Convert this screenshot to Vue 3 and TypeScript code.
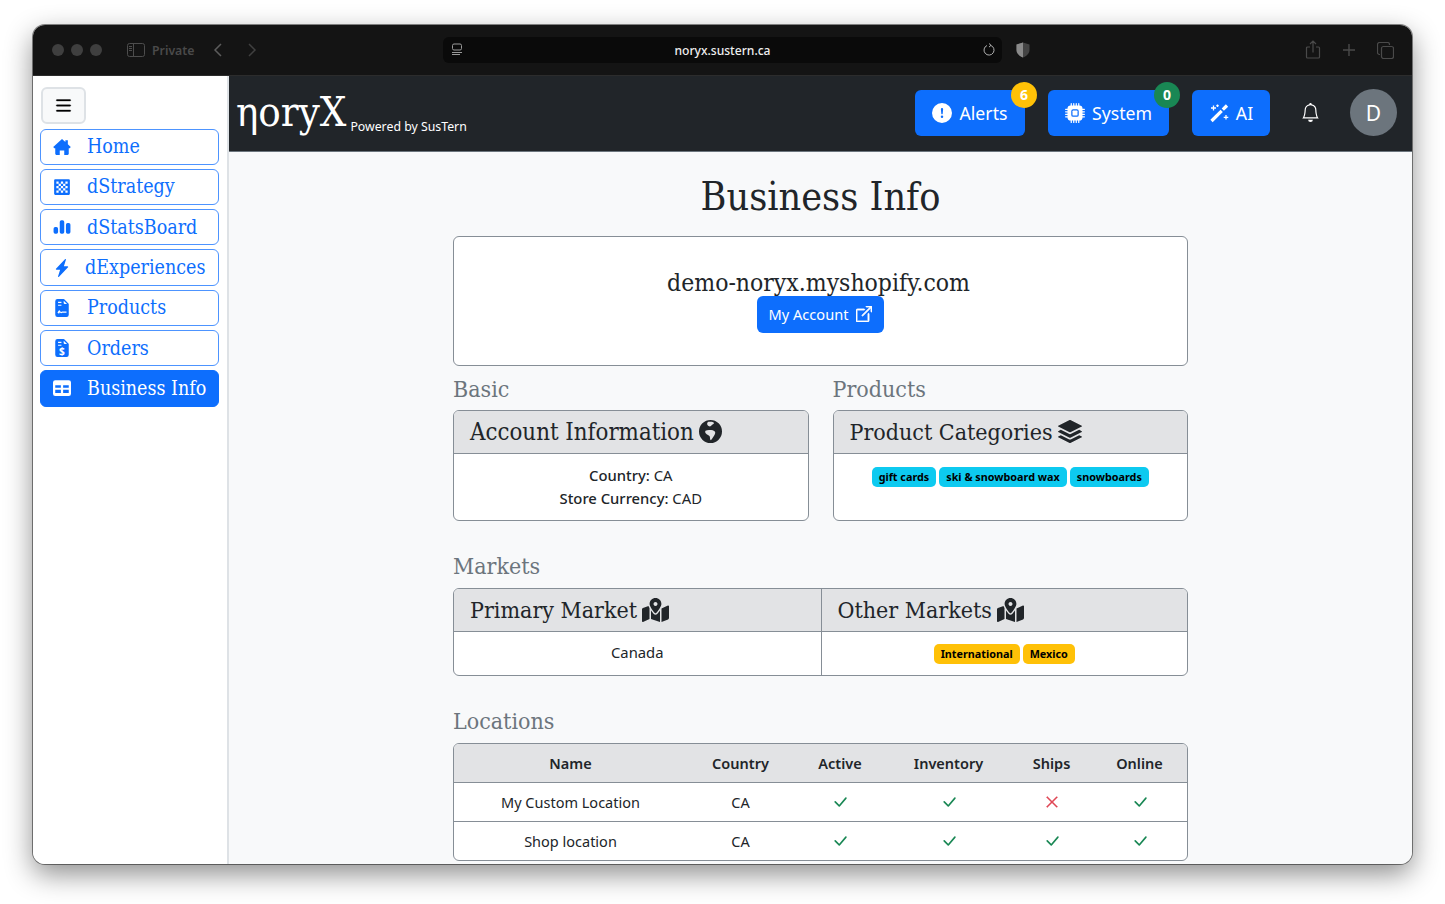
<script setup lang="ts">
interface NavItem {
  label: string
  icon: string
  active?: boolean
  mark?: string
  tight?: boolean
}

const cells = (): string => {
  let d = 'M2 1h12a1 1 0 0 1 1 1v12a1 1 0 0 1-1 1H2a1 1 0 0 1-1-1V2a1 1 0 0 1 1-1z'
  for (let r = 0; r < 5; r++) {
    for (let c = 0; c < 5; c++) {
      if ((r + c) % 2 === 0) d += `M${3 + c * 2} ${3 + r * 2}h2v2h-2z`
    }
  }
  return d
}

const filePath = 'M4 0h5.3a1 1 0 0 1 .7.3L13.7 4a1 1 0 0 1 .3.7V14a2 2 0 0 1-2 2H4a2 2 0 0 1-2-2V2a2 2 0 0 1 2-2zM9.5 1.5v2a1 1 0 0 0 1 1h2l-3-3zM4.5 2.5v1h3v-1zM4.5 5v1h3V5z'

const icons: Record<string, string> = {
  home: 'M8 .8 11 3.500V2h2.200v3.500L15.800 8l-.9 1H14v5a1 1 0 0 1-1 1h-3v-4H6v4H3a1 1 0 0 1-1-1V9H1.100L.2 8z',
  grid: cells(),
  bars: 'M2 8h1a1.5 1.5 0 0 1 1.500 1.500v3A1.500 1.500 0 0 1 3 14H2a1.500 1.500 0 0 1-1.500-1.500v-3A1.500 1.500 0 0 1 2 8zM7.500 2h1A1.500 1.500 0 0 1 10 3.500v9A1.500 1.500 0 0 1 8.500 14h-1A1.500 1.500 0 0 1 6 12.500v-9A1.500 1.500 0 0 1 7.500 2zM13 4.500h1a1.500 1.500 0 0 1 1.500 1.500v6.500A1.500 1.500 0 0 1 14 14h-1a1.500 1.500 0 0 1-1.500-1.500V6A1.500 1.500 0 0 1 13 4.500z',
  bolt: 'M11.251.068a.5.5 0 0 1 .227.58L9.677 6.5H13a.5.5 0 0 1 .364.843l-8 8.5a.5.5 0 0 1-.842-.49L6.323 9.5H3a.5.5 0 0 1-.364-.843l8-8.5a.5.5 0 0 1 .615-.09z',
  file: filePath,
  fileSquiggle: `${filePath}M4 12.300c1-2.600 1.800-3 2.500-1.500.5 1 1 .9 1.500.4h4v1.100H8.300c-.9.5-1.700.3-2.200-.6-.3.3-.5.8-.7 1.300z`,
  table: 'M0 3a2 2 0 0 1 2-2h12a2 2 0 0 1 2 2v10a2 2 0 0 1-2 2H2a2 2 0 0 1-2-2V3zM2 5.500v2.300h5V5.500H2zM9 5.500v2.300h5V5.500H9zM2 9.500V12a.5.5 0 0 0 0 .5h5v-3H2zM9 9.500v3h5V9.500H9z',
}

const navItems: NavItem[] = [
  { label: 'Home', icon: 'home' },
  { label: 'dStrategy', icon: 'grid' },
  { label: 'dStatsBoard', icon: 'bars' },
  { label: 'dExperiences', icon: 'bolt', tight: true },
  { label: 'Products', icon: 'fileSquiggle' },
  { label: 'Orders', icon: 'file', mark: '$' },
  { label: 'Business Info', icon: 'table', active: true },
]

const categories = ['gift cards', 'ski & snowboard wax', 'snowboards']
const markets = ['International', 'Mexico']

// dark disc, continents cut out
const globePath = 'M8 0a8 8 0 1 0 0 16A8 8 0 0 0 8 0ZM4.500 7.500C5.500 6.800 7 6.800 8.500 7 10 7.200 11.500 7.800 11.300 9 11 10.500 9.500 12.500 8.300 14 7.500 14 7.800 12.500 7.500 11.500 7.200 10.500 5.500 10.500 4.500 9 4.200 8.500 4.200 8 4.500 7.500ZM6.500 1.300C8 1 10 1.200 10.500 2 10 3 8.800 3.200 8.300 4.200 7.500 4.800 6.500 4.300 5.800 3.300 5.500 2.500 5.800 1.800 6.500 1.300Z'
const stackPath = 'm14.12 10.163 1.715.858c.22.11.22.424 0 .534L8.267 15.34a.598.598 0 0 1-.534 0L.165 11.555a.299.299 0 0 1 0-.534l1.716-.858 5.317 2.659c.505.252 1.1.252 1.604 0l5.317-2.66zM7.733.063a.598.598 0 0 1 .534 0l7.568 3.784a.3.3 0 0 1 0 .535L8.267 8.165a.598.598 0 0 1-.534 0L.165 4.382a.299.299 0 0 1 0-.535L7.733.063zM14.12 6.576l1.715.858c.22.11.22.424 0 .534l-7.568 3.784a.598.598 0 0 1-.534 0L.165 7.968a.299.299 0 0 1 0-.534l1.716-.858 5.317 2.659c.505.252 1.1.252 1.604 0l5.317-2.659z'
const mapPath = 'M288 0c-69.59 0-126 56.41-126 126 0 56.26 82.35 158.8 113.9 196.02 6.39 7.54 17.82 7.54 24.2 0C331.65 284.8 414 182.26 414 126 414 56.41 357.59 0 288 0zm0 168c-23.2 0-42-18.8-42-42s18.8-42 42-42 42 18.8 42 42-18.8 42-42 42zM20.12 215.95A32.006 32.006 0 0 0 0 245.66v250.32c0 11.32 11.43 19.06 21.94 14.86L160 448V214.92c-8.84-15.98-16.07-31.54-21.25-46.42L20.12 215.95zM288 359.67c-14.07 0-27.38-6.18-36.51-16.96-19.66-23.2-40.57-49.62-59.49-76.72v182l192 64V266c-18.92 27.09-39.82 53.52-59.49 76.72-9.13 10.77-22.44 16.95-36.51 16.95zm266.06-198.51L416 224v288l139.88-55.95A31.996 31.996 0 0 0 576 426.34V176.02c0-11.32-11.43-19.06-21.94-14.86z'

const checkPath = 'M12.736 3.97a.733.733 0 0 1 1.047 0c.286.289.29.756.01 1.05L7.88 12.01a.733.733 0 0 1-1.065.02L3.217 8.384a.757.757 0 0 1 0-1.06.733.733 0 0 1 1.047 0l3.052 3.093 5.4-6.425a.247.247 0 0 1 .02-.022Z'
const crossPath = 'M2.146 2.854a.5.5 0 1 1 .708-.708L8 7.293l5.146-5.147a.5.5 0 0 1 .708.708L8.707 8l5.147 5.146a.5.5 0 0 1-.708.708L8 8.707l-5.146 5.147a.5.5 0 0 1-.708-.708L7.293 8 2.146 2.854Z'

const columns = ['Name', 'Country', 'Active', 'Inventory', 'Ships', 'Online']
const locations = [
  { name: 'My Custom Location', country: 'CA', flags: [true, true, false, true] },
  { name: 'Shop location', country: 'CA', flags: [true, true, true, true] },
]
</script>

<template>
  <div class="stage">
    <div class="window">
      <div class="chrome">
        <div class="chrome-left">
          <span class="light"></span>
          <span class="light"></span>
          <span class="light"></span>
          <svg class="tabs-icon" viewBox="0 0 18 14" width="18" height="14" fill="none" stroke="currentColor">
            <rect x="0.5" y="0.5" width="17" height="13" rx="2" />
            <path d="M6.500 .5v13M2 3.500h3M2 5.500h3M2 7.500h3" />
          </svg>
          <span class="private">Private</span>
          <svg class="chev" viewBox="0 0 10 16" width="10" height="16" fill="none" stroke="#5c5c5c" stroke-width="1.500">
            <path d="M8 2 2 8l6 6" />
          </svg>
          <svg class="chev chev-next" viewBox="0 0 10 16" width="10" height="16" fill="none" stroke="#404040" stroke-width="1.500">
            <path d="m2 2 6 6-6 6" />
          </svg>
        </div>
        <div class="urlbar">
          <svg viewBox="0 0 12 14" width="12" height="14" fill="none" stroke="#9a9a9a">
            <rect x="1.500" y="1" width="9" height="6" rx="1.500" />
            <path d="M1 9.500h10M1 11.500h8" />
          </svg>
          <span class="url">noryx.sustern.ca</span>
          <svg viewBox="0 0 14 14" width="14" height="14" fill="none" stroke="#b0b0b0">
            <path d="M8.500 2.300a5 5 0 1 1-3.500.2M7 .5l2 1.800-2 1.800" />
          </svg>
        </div>
        <svg class="shield" viewBox="0 0 14 16" width="14" height="16">
          <path d="M7 .5 13.500 2.500V8c0 3.500-3 6-6.500 7.500C3.500 14 .5 11.500 .5 8V2.500z" fill="#444" />
          <path d="M7 .5 .5 2.500V8c0 3.500 3 6 6.500 7.500z" fill="#8a8a8a" />
        </svg>
        <div class="chrome-right">
          <svg viewBox="0 0 16 20" width="16" height="20" fill="none" stroke="#4a4a4a" stroke-width="1.200">
            <path d="M5 7H2.500a1 1 0 0 0-1 1v9a1 1 0 0 0 1 1h11a1 1 0 0 0 1-1V8a1 1 0 0 0-1-1H11M8 12.500V1.500M5 4l3-3 3 3" />
          </svg>
          <svg viewBox="0 0 14 14" width="14" height="14" fill="none" stroke="#4a4a4a" stroke-width="1.400">
            <path d="M7 1v12M1 7h12" />
          </svg>
          <svg viewBox="0 0 17 17" width="17" height="17" fill="none" stroke="#4a4a4a" stroke-width="1.200">
            <rect x="4.500" y="4.500" width="12" height="12" rx="2" />
            <path d="M3 12.500H2.500a2 2 0 0 1-2-2v-8a2 2 0 0 1 2-2h8a2 2 0 0 1 2 2V3" />
          </svg>
        </div>
      </div>

      <div class="app">
        <aside class="sidebar">
          <button class="toggle" type="button" aria-label="Toggle menu">
            <svg viewBox="0 0 16 16" width="21" height="21" fill="#000" stroke="#000" stroke-width=".3">
              <path d="M2.500 12a.5.5 0 0 1 .5-.5h10a.5.5 0 0 1 0 1H3a.5.5 0 0 1-.5-.5zm0-4a.5.5 0 0 1 .5-.5h10a.5.5 0 0 1 0 1H3a.5.5 0 0 1-.5-.5zm0-4a.5.5 0 0 1 .5-.5h10a.5.5 0 0 1 0 1H3a.5.5 0 0 1-.5-.5z" />
            </svg>
          </button>
          <nav class="nav">
            <a
              v-for="item in navItems"
              :key="item.label"
              class="nav-item"
              :class="{ active: item.active, tight: item.tight }"
            >
              <svg class="nav-icon" viewBox="0 0 16 16" width="18" height="18" fill="currentColor">
                <path :d="icons[item.icon]" fill-rule="evenodd" />
                <text v-if="item.mark" x="8" y="14" class="nav-mark">{{ item.mark }}</text>
              </svg>
              <span>{{ item.label }}</span>
            </a>
          </nav>
        </aside>

        <div class="content">
          <header class="topbar">
            <div class="brand">
              <span class="logo">ηoryX</span>
              <span class="powered">Powered by SusTern</span>
            </div>
            <div class="actions">
              <button class="action alerts" type="button">
                <svg viewBox="0 0 16 16" width="20" height="20" fill="currentColor">
                  <path d="M16 8A8 8 0 1 1 0 8a8 8 0 0 1 16 0zM8 4a.905.905 0 0 0-.9.995l.35 3.507a.552.552 0 0 0 1.100 0l.35-3.507A.905.905 0 0 0 8 4zm.002 6a1 1 0 1 0 0 2 1 1 0 0 0 0-2z" />
                </svg>
                Alerts
                <span class="count count-warn">6</span>
              </button>
              <button class="action system" type="button">
                <svg viewBox="0 0 16 16" width="20" height="20" fill="currentColor">
                  <path d="M6.500 6a.5.5 0 0 0-.5.5v3a.5.5 0 0 0 .5.5h3a.5.5 0 0 0 .5-.5v-3a.5.5 0 0 0-.5-.5h-3z" />
                  <path d="M5.500.5a.5.5 0 0 0-1 0V2A2.500 2.500 0 0 0 2 4.500H.5a.5.5 0 0 0 0 1H2v1H.5a.5.5 0 0 0 0 1H2v1H.5a.5.5 0 0 0 0 1H2v1H.5a.5.5 0 0 0 0 1H2A2.500 2.500 0 0 0 4.500 14v1.500a.5.5 0 0 0 1 0V14h1v1.500a.5.5 0 0 0 1 0V14h1v1.500a.5.5 0 0 0 1 0V14h1v1.500a.5.5 0 0 0 1 0V14a2.500 2.500 0 0 0 2.500-2.500h1.500a.5.5 0 0 0 0-1H14v-1h1.500a.5.5 0 0 0 0-1H14v-1h1.500a.5.5 0 0 0 0-1H14v-1h1.500a.5.5 0 0 0 0-1H14A2.500 2.500 0 0 0 11.500 2V.5a.5.5 0 0 0-1 0V2h-1V.5a.5.5 0 0 0-1 0V2h-1V.5a.5.5 0 0 0-1 0V2h-1V.5zm1 4.500h3A1.500 1.500 0 0 1 11 6.500v3A1.500 1.500 0 0 1 9.500 11h-3A1.500 1.500 0 0 1 5 9.500v-3A1.500 1.500 0 0 1 6.500 5z" />
                </svg>
                System
                <span class="count count-ok">0</span>
              </button>
              <button class="action ai" type="button">
                <svg viewBox="0 0 20 20" width="20" height="20" fill="none" stroke="currentColor">
                  <path d="M2.500 18 12.700 7.800" stroke-width="3.200" />
                  <path d="m13.800 6.700 4.200-4.200" stroke-width="3.200" />
                  <path d="M4.500 2.500v5M2 5h5M8.500 1.500v2.400M7.300 2.700h2.400M17 12v4.600M14.700 14.300h4.600" stroke-width="1.300" />
                </svg>
                AI
              </button>
              <svg class="bell" viewBox="0 0 16 16" width="19" height="19" fill="#fff">
                <path d="M8 16a2 2 0 0 0 2-2H6a2 2 0 0 0 2 2zM8 1.918l-.797.161A4.002 4.002 0 0 0 4 6c0 .628-.134 2.197-.459 3.742-.16.767-.376 1.566-.663 2.258h10.244c-.287-.692-.502-1.490-.663-2.258C12.134 8.197 12 6.628 12 6a4.002 4.002 0 0 0-3.203-3.920L8 1.917zM14.220 12c.223.447.481.801.78 1H1c.299-.199.557-.553.78-1C2.680 10.200 3 6.880 3 6c0-2.420 1.720-4.440 4.005-4.901a1 1 0 1 1 1.990 0A5.002 5.002 0 0 1 13 6c0 .880.320 4.200 1.220 6z" />
              </svg>
              <span class="avatar">D</span>
            </div>
          </header>

          <main class="main">
            <h1 class="title">Business Info</h1>
            <div class="column">
              <section class="store">
                <div class="store-name">demo-noryx.myshopify.com</div>
                <button class="account" type="button">
                  My Account
                  <svg viewBox="0 0 16 16" width="16" height="16" fill="currentColor" stroke="currentColor" stroke-width=".9">
                    <path d="M8.636 3.500a.5.5 0 0 0-.5-.5H1.500A1.500 1.500 0 0 0 0 4.500v10A1.500 1.500 0 0 0 1.500 16h10a1.500 1.500 0 0 0 1.500-1.500V7.864a.5.5 0 0 0-1 0V14.500a.5.5 0 0 1-.5.5h-10a.5.5 0 0 1-.5-.5v-10a.5.5 0 0 1 .5-.5h6.636a.5.5 0 0 0 .5-.5z" />
                    <path d="M16 .5a.5.5 0 0 0-.5-.5h-5a.5.5 0 0 0 0 1h3.793L6.146 9.146a.5.5 0 1 0 .708.708L15 1.707V5.500a.5.5 0 0 0 1 0v-5z" />
                  </svg>
                </button>
              </section>

              <div class="two-up">
                <div>
                  <h2 class="section">Basic</h2>
                  <div class="card">
                    <div class="card-head head-wide">
                      Account Information
                      <svg viewBox="0 0 16 16" width="23" height="23" fill="currentColor"><path :d="globePath" fill-rule="evenodd" /></svg>
                    </div>
                    <div class="card-body info">
                      <div>Country: <span class="value">CA</span></div>
                      <div>Store Currency: <span class="value">CAD</span></div>
                    </div>
                  </div>
                </div>
                <div>
                  <h2 class="section">Products</h2>
                  <div class="card">
                    <div class="card-head">
                      Product Categories
                      <svg viewBox="0 0 16 16" width="24" height="24" fill="currentColor"><path :d="stackPath" /></svg>
                    </div>
                    <div class="card-body tags">
                      <span v-for="c in categories" :key="c" class="tag tag-info">{{ c }}</span>
                    </div>
                  </div>
                </div>
              </div>

              <h2 class="section section-gap">Markets</h2>
              <div class="card markets">
                <div class="market">
                  <div class="card-head">
                    Primary Market
                    <svg viewBox="0 0 576 512" width="27" height="24" fill="currentColor"><path :d="mapPath" /></svg>
                  </div>
                  <div class="market-body canada">Canada</div>
                </div>
                <div class="market">
                  <div class="card-head">
                    Other Markets
                    <svg viewBox="0 0 576 512" width="27" height="24" fill="currentColor"><path :d="mapPath" /></svg>
                  </div>
                  <div class="market-body tags">
                    <span v-for="m in markets" :key="m" class="tag tag-warn">{{ m }}</span>
                  </div>
                </div>
              </div>

              <h2 class="section section-gap">Locations</h2>
              <div class="card">
                <table class="locations">
                  <thead>
                    <tr>
                      <th v-for="c in columns" :key="c">{{ c }}</th>
                    </tr>
                  </thead>
                  <tbody>
                    <tr v-for="loc in locations" :key="loc.name">
                      <td>{{ loc.name }}</td>
                      <td>{{ loc.country }}</td>
                      <td v-for="(flag, idx) in loc.flags" :key="idx">
                        <svg
                          viewBox="0 0 16 16"
                          :width="flag ? 18 : 14"
                          :height="flag ? 18 : 14"
                          :class="flag ? 'yes' : 'no'"
                          fill="currentColor"
                        >
                          <path :d="flag ? checkPath : crossPath" />
                        </svg>
                      </td>
                    </tr>
                  </tbody>
                </table>
              </div>
            </div>
          </main>
        </div>
      </div>
    </div>
  </div>
</template>

<style>
html,
body {
  margin: 0;
  background: #fff;
  overflow: hidden;
}
</style>

<style scoped>
.stage {
  box-sizing: border-box;
  width: 1445px;
  height: 904px;
  padding: 25px 33px 40px 33px;
  font-family: 'Noto Sans', sans-serif;
  color: #212529;
}

.window {
  display: flex;
  flex-direction: column;
  height: 100%;
  border-radius: 12px;
  overflow: hidden;
  box-shadow: 0 0 0 1px rgba(0, 0, 0, 0.45), 0 10px 28px rgba(0, 0, 0, 0.45);
}

.chrome {
  display: flex;
  align-items: center;
  height: 50px;
  flex: none;
  background: #141414;
  border-bottom: 1px solid #2c2c2c;
}

.chrome-left {
  display: flex;
  align-items: center;
  width: 410px;
  padding-left: 19px;
  box-sizing: border-box;
}

.light {
  width: 12px;
  height: 12px;
  margin-right: 7px;
  border-radius: 50%;
  background: #3f3f3f;
}

.tabs-icon {
  margin-left: 18px;
  color: #4d4d4d;
}

.private {
  margin-left: 7px;
  font-size: 12.3px;
  font-weight: 600;
  color: #4a4a4a;
}

.chev {
  margin-left: 18px;
}

.chev-next {
  margin-left: 24px;
}

.urlbar {
  display: flex;
  align-items: center;
  justify-content: space-between;
  width: 559px;
  height: 26px;
  padding: 0 6px 0 8px;
  box-sizing: border-box;
  border-radius: 6px;
  background: #0a0a0a;
}

.url {
  font-size: 12.1px;
  font-weight: 500;
  color: #eeeeee;
}

.shield {
  margin-left: 14px;
}

.chrome-right {
  display: flex;
  align-items: center;
  gap: 21px;
  margin-left: auto;
  padding-right: 18px;
}

.app {
  display: flex;
  flex: 1;
  min-height: 0;
}

.sidebar {
  width: 196px;
  flex: none;
  padding: 11px 8px 0 7px;
  box-sizing: border-box;
  background: #fff;
  border-right: 2px solid #dee2e6;
}

.toggle {
  display: flex;
  align-items: center;
  justify-content: center;
  width: 45px;
  height: 37px;
  margin-left: 1px;
  padding: 0;
  border: 2px solid #dee2e6;
  border-radius: 6px;
  background: #f8f9fa;
}

.nav {
  display: flex;
  flex-direction: column;
  gap: 4px;
  margin-top: 4.500px;
}

.nav-item {
  display: flex;
  align-items: center;
  height: 36.3px;
  padding-left: 12px;
  box-sizing: border-box;
  border: 1.5px solid #4d94ff;
  border-radius: 6px;
  font-family: 'DejaVu Serif Condensed', 'DejaVu Serif', serif;
  font-size: 19.5px;
  color: #0d6efd;
}

.nav-item.active {
  background: #0d6efd;
  border-color: #0d6efd;
  color: #fff;
}

.nav-icon {
  flex: none;
  margin-right: 16px;
}

.nav-item.tight .nav-icon {
  margin-right: 14px;
}

.nav-mark {
  font-family: 'Noto Sans', sans-serif;
  font-size: 9px;
  font-weight: 700;
  text-anchor: middle;
  fill: #fff;
}

.content {
  flex: 1;
  display: flex;
  flex-direction: column;
  min-width: 0;
  background: #f8f9fa;
}

.topbar {
  display: flex;
  align-items: center;
  justify-content: space-between;
  flex: none;
  height: 76px;
  padding: 0 15px 0 7px;
  box-sizing: border-box;
  background: #212529;
  border-bottom: 1px solid #6c757d;
}

.brand {
  display: flex;
  align-items: flex-end;
  gap: 4px;
  padding-bottom: 4px;
  color: #fff;
}

.logo {
  font-family: 'DejaVu Serif Condensed', 'DejaVu Serif', serif;
  font-size: 41.500px;
  line-height: 1;
}

.powered {
  margin-bottom: -4px;
  font-size: 12.300px;
  line-height: 18px;
}

.actions {
  display: flex;
  align-items: center;
  margin-bottom: 2px;
}

.action {
  position: relative;
  display: flex;
  align-items: center;
  justify-content: center;
  gap: 7px;
  height: 46px;
  margin-right: 23px;
  padding: 0;
  border: 0;
  border-radius: 6px;
  background: #0d6efd;
  color: #fff;
  font-family: inherit;
  font-size: 17.700px;
}

.alerts {
  width: 110px;
}

.system {
  width: 121px;
}

.ai {
  width: 78px;
}

.count {
  position: absolute;
  top: -8px;
  right: -12px;
  width: 26px;
  height: 26px;
  border-radius: 50%;
  font-size: 14px;
  font-weight: 700;
  line-height: 26px;
  text-align: center;
  color: #fff;
}

.count-warn {
  background: #ffc107;
}

.count-ok {
  right: -11px;
  background: #198754;
}

.bell {
  margin: 0 30px 0 8px;
}

.avatar {
  display: flex;
  align-items: center;
  justify-content: center;
  width: 47px;
  height: 47px;
  border-radius: 50%;
  background: #6c757d;
  color: #fff;
  font-size: 21px;
}

.main {
  flex: 1;
  min-height: 0;
  overflow: hidden;
  text-align: center;
}

.title {
  margin: 0;
  height: 84px;
  font-family: 'DejaVu Serif Condensed', 'DejaVu Serif', serif;
  font-size: 39.200px;
  font-weight: 400;
  line-height: 90px;
}

.column {
  width: 735px;
  margin: 0 auto;
  text-align: left;
}

.store {
  display: flex;
  flex-direction: column;
  align-items: center;
  height: 130px;
  padding-top: 33px;
  box-sizing: border-box;
  border: 1px solid #868e96;
  border-radius: 6px;
  background: #fff;
}

.store-name {
  padding-right: 4px;
  font-family: 'DejaVu Serif Condensed', 'DejaVu Serif', serif;
  font-size: 24.500px;
  line-height: 26px;
}

.account {
  display: flex;
  align-items: center;
  gap: 8px;
  height: 37px;
  padding: 0 12px 2px;
  border: 0;
  border-radius: 6px;
  background: #0d6efd;
  color: #fff;
  font-family: inherit;
  font-size: 14.600px;
}

.two-up {
  display: grid;
  grid-template-columns: 1fr 1fr;
  gap: 24px;
}

.section {
  margin: 9px 0 6px;
  font-family: 'DejaVu Serif Condensed', 'DejaVu Serif', serif;
  font-size: 23px;
  font-weight: 400;
  line-height: 29px;
  color: #6c757d;
}

.section-gap {
  margin: 31px 0 7px;
}

.card {
  border: 1px solid #868e96;
  border-radius: 6px;
  background: #fff;
  overflow: hidden;
}

.card-head {
  display: flex;
  align-items: center;
  gap: 5px;
  height: 43px;
  padding: 0 0 1px 16px;
  box-sizing: border-box;
  background: #e2e3e5;
  border-bottom: 1px solid #868e96;
  font-family: 'DejaVu Serif Condensed', 'DejaVu Serif', serif;
  font-size: 23px;
}

.head-wide {
  font-size: 23.800px;
}

.card-body {
  height: 66px;
  box-sizing: border-box;
}

.info {
  padding-top: 10px;
  text-align: center;
  font-size: 14.800px;
  font-weight: 500;
  line-height: 23px;
}

.value {
  font-weight: 400;
}

.tags {
  display: flex;
  justify-content: center;
  align-items: flex-start;
  gap: 3px;
  padding-top: 13px;
}

.tag {
  padding: 0 7px;
  height: 19.500px;
  border-radius: 5px;
  font-size: 10.800px;
  font-weight: 700;
  line-height: 19.500px;
  color: #000;
}

.tag-info {
  background: #0dcaf0;
}

.tag-warn {
  background: #ffc107;
}

.markets {
  display: grid;
  grid-template-columns: 1fr 1fr;
}

.market + .market {
  border-left: 1px solid #868e96;
}

.market-body {
  height: 43px;
  box-sizing: border-box;
  text-align: center;
  font-size: 14.800px;
}

.canada {
  padding-top: 10px;
}

.market-body.tags {
  padding-top: 12px;
}

.locations {
  width: 100%;
  border-collapse: collapse;
  table-layout: fixed;
  text-align: center;
  font-size: 14.500px;
}

.locations th {
  height: 38px;
  padding: 0;
  background: #e2e3e5;
  border-bottom: 1px solid #868e96;
  font-weight: 600;
}

.locations td {
  height: 38px;
  padding: 0;
  border-bottom: 1px solid #868e96;
}

.locations tr:last-child td {
  border-bottom: 0;
}

.locations th:nth-child(1) {
  width: 233px;
}

.locations th:nth-child(2) {
  width: 107px;
}

.locations th:nth-child(3) {
  width: 92px;
}

.locations th:nth-child(4) {
  width: 125px;
}

.locations th:nth-child(5) {
  width: 81px;
}

.locations svg {
  display: block;
  margin: 0 auto;
}

.yes {
  color: #198754;
}

.no {
  color: #dc3545;
  stroke: #dc3545;
  stroke-width: 0.8;
}
</style>
